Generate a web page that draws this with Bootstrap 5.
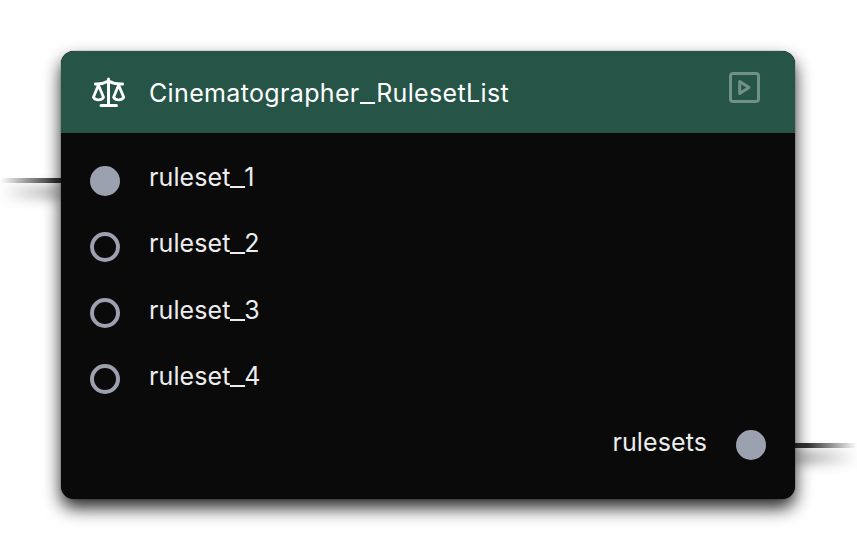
<!DOCTYPE html>
<html lang="en">
<head>
<meta charset="utf-8">
<meta name="viewport" content="width=device-width, initial-scale=1">
<title>Cinematographer_RulesetList</title>
<link href="https://cdn.jsdelivr.net/npm/bootstrap@5.3.0/dist/css/bootstrap.min.css" rel="stylesheet">
<style>
  body { background: #fff; font-family: Inter, sans-serif; }
  .canvas { width: 857px; height: 550px; }
  .graph-node {
    left: 61px; top: 51px; width: 734px; height: 448px;
    background: #0a0a0a; border-radius: 13px; color: #ededed;
    box-shadow: 0 9px 17px rgba(0,0,0,.85), 0 0 1px #222;
  }
  .node-head { height: 82px; background: #265548; border-radius: 13px 13px 0 0; padding: 0 35.5px 0 30px; color: #fff; }
  .node-title { font-size: 25px; line-height: 30px; margin: 2px 0 0 22px; letter-spacing: .35px; }
  .under { display: inline-block; width: 16.5px; transform: scaleX(1.32); transform-origin: 0 50%; }
  .port .under { width: 13.7px; }
  .run-icon { margin-top: -10px; }
  .ports { padding: 15px 29px 0; }
  .port { height: 66.1px; font-size: 25px; line-height: 30px; letter-spacing: .1px; }
  .port-label { margin: -7.4px 29px 0; }
  .dot { width: 30px; height: 30px; border: 4px solid #9ba1af; border-radius: 50%; }
  .dot-on { background: #9ba1af; }
  .wire { height: 5px; width: 62px; filter: drop-shadow(0 12px 7px rgba(0,0,0,.85)); }
  .wire-in { left: 0; top: 178px; background: linear-gradient(90deg, rgba(40,44,42,0), #303432 90%); }
  .wire-out { left: 795px; top: 443px; background: linear-gradient(270deg, rgba(40,40,40,0), #333 80%); }
</style>
</head>
<body>
<main class="canvas position-relative overflow-hidden">
  <div class="wire wire-in position-absolute"></div>
  <div class="wire wire-out position-absolute"></div>
  <section class="graph-node position-absolute">
    <header class="node-head d-flex align-items-center">
      <svg width="36" height="32" viewBox="0 0 36 32" fill="none" stroke="#fff" stroke-width="3" stroke-linecap="round" stroke-linejoin="round">
        <path d="M17.5 3V29.6M10 29.6H25.5M4.5 8C10 8.3 14 7 17.5 5C21 7 25 8.3 31.5 8"/>
        <path stroke-width="2.8" d="M7.4 9L2.4 21.3C4.5 24.8 10.3 24.8 12.5 21.3ZM27.6 9L22.6 21.3C24.7 24.8 30.5 24.8 32.7 21.3Z"/>
      </svg>
      <span class="node-title">Cinematographer<span class="under">_</span>RulesetList</span>
      <svg class="run-icon ms-auto" width="31" height="31" viewBox="0 0 31 31" fill="none" stroke="#719086" stroke-width="3" stroke-linejoin="round">
        <rect x="1.5" y="1.5" width="28" height="28" rx="2.5"/>
        <path d="M10.7 9.5V21.5L20 15.5Z"/>
      </svg>
    </header>
    <div class="ports">
      <div class="port d-flex align-items-center"><span class="dot dot-on"></span><span class="port-label">ruleset<span class="under">_</span>1</span></div>
      <div class="port d-flex align-items-center"><span class="dot"></span><span class="port-label">ruleset<span class="under">_</span>2</span></div>
      <div class="port d-flex align-items-center"><span class="dot"></span><span class="port-label">ruleset<span class="under">_</span>3</span></div>
      <div class="port d-flex align-items-center"><span class="dot"></span><span class="port-label">ruleset<span class="under">_</span>4</span></div>
      <div class="port d-flex align-items-center justify-content-end"><span class="port-label">rulesets</span><span class="dot dot-on"></span></div>
    </div>
  </section>
</main>
<script src="https://cdn.jsdelivr.net/npm/bootstrap@5.3.0/dist/js/bootstrap.bundle.min.js"></script>
</body>
</html>
